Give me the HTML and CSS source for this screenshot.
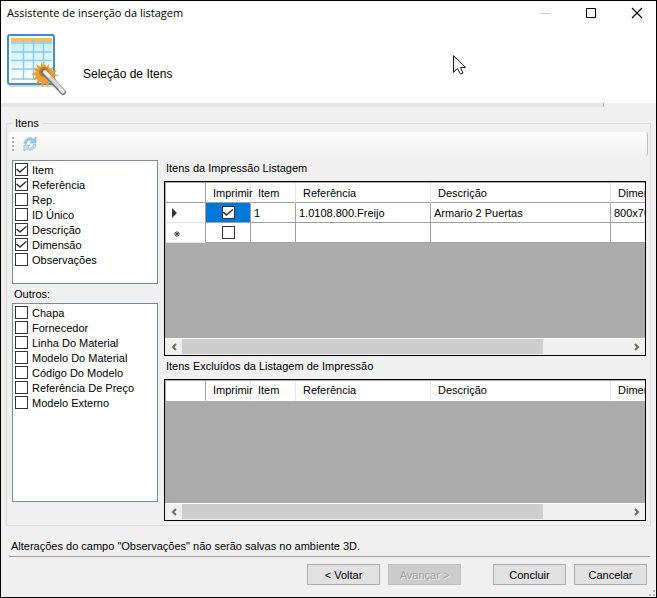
FILE: index.html
```html
<!DOCTYPE html>
<html lang="pt">
<head>
<meta charset="utf-8">
<title>Assistente de inserção da listagem</title>
<link rel="stylesheet" href="styles.css">
</head>
<body>
<div class="window">
  <header class="header">
    <div class="titlebar">
      <h1 class="title">Assistente de inserção da listagem</h1>
      <div class="controls">
        <button class="control" aria-label="Minimizar" disabled><svg width="12" height="12"><path d="M1 6.5h10" stroke="#ccc"/></svg></button>
        <button class="control" aria-label="Maximizar"><svg width="12" height="12"><path d="M1.5 1.5h9v9h-9z" stroke="#000" fill="none"/></svg></button>
        <button class="control" aria-label="Fechar"><svg width="12" height="12"><path d="M1 1l10 10M11 1L1 11" stroke="#000" stroke-width="1.2"/></svg></button>
      </div>
    </div>
    <div class="banner">
      <svg class="logo" width="62" height="64" viewBox="0 0 62 64">
        <defs>
          <linearGradient id="sheet" x2="0" y2="1"><stop offset="0" stop-color="#c4eff9"/><stop offset="1" stop-color="#fff"/></linearGradient>
          <linearGradient id="wand" x1="0" y1="1" x2="1" y2="0"><stop offset="0" stop-color="#555"/><stop offset=".5" stop-color="#ddd"/><stop offset="1" stop-color="#555"/></linearGradient>
        </defs>
        <path d="M2 52h46" stroke="#d5d5d5" stroke-width="2"/>
        <rect x="1" y="1" width="46" height="49" rx="2" fill="#fff" stroke="#3f8fc6" stroke-width="2"/>
        <rect x="4" y="8" width="41" height="39" fill="url(#sheet)"/>
        <path d="M4 4h41v4H4z" fill="#f5bd68"/>
        <path d="M4 9h41M4 18h41M4 26.500h41M4 35h41M4 45h41M16.500 5v41M26.500 5v41M36.500 5v41" stroke="#94c9e3" stroke-width="1.500"/>
        <path d="M38 29l1 4 3-3v5l4-2-1 4 5-1-3 4 5 1-5 2 3 4-5-1 1 5-4-3-1 5-3-4-3 4-1-5-5 2 2-5-5 1 3-4-5-2 5-2-3-4 5 1-2-5 5 3v-5l3 4z" fill="#ed9d35"/>
        <circle cx="37" cy="38" r="5" fill="#c87812"/>
        <path d="M37 38l19 20" stroke="#777" stroke-width="6" stroke-linecap="round"/>
        <path d="M38 38l18 19" stroke="url(#wand)" stroke-width="4" stroke-linecap="round"/>
        <path d="M38 38l4 4M53 55l3 3" stroke="#eee" stroke-width="3" stroke-linecap="round"/>
      </svg>
      <h2 class="step">Seleção de Itens</h2>
    </div>
    <svg class="cursor" width="14" height="22" viewBox="0 0 14 22"><path d="M1.500 1.500v17l4-4 3 5.500 2.500-1-2.500-5.500h5z" fill="#fff" stroke="#223" stroke-width="1"/></svg>
  </header>
  <div class="progress"></div>

  <main class="body">
    <fieldset class="group">
      <legend>Itens</legend>
      <div class="toolbar">
        <span class="grip"></span>
        <button class="refresh" aria-label="Atualizar">
          <svg width="16" height="16" viewBox="0 0 16 16"><path d="M2 7.500C3 2 8 .5 11.500 3L14 1v6H8l2-2C7.500 3 5 4.500 4.500 7.500z" fill="#8cc8ec" stroke="#9fb4c0" stroke-width=".7"/><path d="M14 8.500C13 14 8 15.500 4.500 13L2 15V9h6l-2 2c2.500 2 5 .5 5.500-2.500z" fill="#b9e0f6" stroke="#9fb4c0" stroke-width=".7"/></svg>
        </button>
      </div>
      <div class="panes">
        <div class="side">
          <ul class="checks checks-main">
            <li><label><input type="checkbox" checked>Item</label></li>
            <li><label><input type="checkbox" checked>Referência</label></li>
            <li><label><input type="checkbox">Rep.</label></li>
            <li><label><input type="checkbox">ID Único</label></li>
            <li><label><input type="checkbox" checked>Descrição</label></li>
            <li><label><input type="checkbox" checked>Dimensão</label></li>
            <li><label><input type="checkbox">Observações</label></li>
          </ul>
          <h3 class="side-title">Outros:</h3>
          <ul class="checks checks-other">
            <li><label><input type="checkbox">Chapa</label></li>
            <li><label><input type="checkbox">Fornecedor</label></li>
            <li><label><input type="checkbox">Linha Do Material</label></li>
            <li><label><input type="checkbox">Modelo Do Material</label></li>
            <li><label><input type="checkbox">Código Do Modelo</label></li>
            <li><label><input type="checkbox">Referência De Preço</label></li>
            <li><label><input type="checkbox">Modelo Externo</label></li>
          </ul>
        </div>
        <div class="grids">
          <h3 class="grid-title">Itens da Impressão Listagem</h3>
          <div class="grid grid-included">
            <div class="view">
              <table>
                <colgroup><col class="c-mark"><col class="c-small"><col class="c-small"><col class="c-ref"><col class="c-desc"><col class="c-dim"></colgroup>
                <thead><tr><th></th><th>Imprimir</th><th>Item</th><th>Referência</th><th>Descrição</th><th>Dimensão</th></tr></thead>
                <tbody>
                  <tr><td class="mark"><svg width="16" height="10"><path d="M6 0l5 5-5 5z" fill="#333"/></svg></td><td class="tick selected"><input type="checkbox" aria-label="Imprimir item 1" checked></td><td>1</td><td>1.0108.800.Freijo</td><td>Armario 2 Puertas</td><td>800x700x300</td></tr>
                  <tr><td class="mark"><svg width="16" height="10"><path d="M11 3v6M8 6h6M9 4l4 4M13 4L9 8" stroke="#444"/></svg></td><td class="tick"><input type="checkbox" aria-label="Imprimir novo item"></td><td></td><td></td><td></td><td></td></tr>
                </tbody>
              </table>
            </div>
            <div class="scroll">
              <button class="arrow" aria-label="Rolar para a esquerda"><svg width="6" height="8"><path d="M5 1L2 4l3 3" fill="none" stroke="#776560" stroke-width="2"/></svg></button>
              <div class="track"><div class="thumb"></div></div>
              <button class="arrow" aria-label="Rolar para a direita"><svg width="6" height="8"><path d="M1 1l3 3-3 3" fill="none" stroke="#776560" stroke-width="2"/></svg></button>
            </div>
          </div>
          <h3 class="grid-title grid-title-next">Itens Excluídos da Listagem de Impressão</h3>
          <div class="grid grid-excluded">
            <div class="view">
              <table class="empty">
                <colgroup><col class="c-mark"><col class="c-small"><col class="c-small"><col class="c-ref"><col class="c-desc"><col class="c-dim"></colgroup>
                <thead><tr><th></th><th>Imprimir</th><th>Item</th><th>Referência</th><th>Descrição</th><th>Dimensão</th></tr></thead>
              </table>
            </div>
            <div class="scroll">
              <button class="arrow" aria-label="Rolar para a esquerda"><svg width="6" height="8"><path d="M5 1L2 4l3 3" fill="none" stroke="#776560" stroke-width="2"/></svg></button>
              <div class="track"><div class="thumb"></div></div>
              <button class="arrow" aria-label="Rolar para a direita"><svg width="6" height="8"><path d="M1 1l3 3-3 3" fill="none" stroke="#776560" stroke-width="2"/></svg></button>
            </div>
          </div>
        </div>
      </div>
    </fieldset>
    <p class="note">Alterações do campo "Observações" não serão salvas no ambiente 3D.</p>
  </main>
  <footer class="footer">
    <button class="btn">&lt; Voltar</button>
    <button class="btn" disabled>Avançar &gt;</button>
    <button class="btn btn-finish">Concluir</button>
    <button class="btn">Cancelar</button>
  </footer>
  <svg class="resize" width="8" height="8"><path d="M5 1h2v2H5zM5 5h2v2H5zM1 5h2v2H1z" fill="#bbb"/></svg>
</div>
</body>
</html>
```
FILE: styles.css
```css
* { box-sizing: border-box; }

body {
  margin: 0;
  font: 11px/14px "Liberation Sans", Arial, sans-serif;
  color: #000;
}

h1, h2, h3, p, ul { margin: 0; padding: 0; font: inherit; }
button { font: inherit; color: inherit; border: 0; background: none; padding: 0; }
svg { display: block; }

.window {
  position: relative;
  display: flex;
  flex-direction: column;
  min-height: 100vh;
  border: 1px solid #000;
  border-bottom-width: 2px;
  background: #f0f0f0;
}

/* Title bar and banner */
.header { position: relative; background: #fff; height: 102px; }
.titlebar { display: flex; justify-content: space-between; height: 24px; padding-left: 6px; }
.title { font: 11px/24px "Open Sans", "Noto Sans", sans-serif; white-space: nowrap; }
.controls { display: flex; }
.control { width: 46px; display: grid; place-items: center; }
.controls .control:last-child { width: 42px; padding-left: 4px; }
.banner { display: flex; align-items: flex-start; gap: 14px; padding: 9px 5px 0 6px; }
.step { padding-top: 33px; font-size: 12px; }
.cursor { position: absolute; left: 451px; top: 53px; }

.progress { width: 603px; max-width: 92%; height: 4px; flex: none; background: #e5e5e5; border-right: 1px solid #b4b4b4; }

/* Group box */
.body { flex: 1; display: flex; flex-direction: column; padding: 9px 5px 0; }
.group {
  flex: 1;
  min-width: 0;
  margin: 0;
  padding: 2px 2px 4px;
  border: 1px solid #dcdcdc;
}
.group legend { margin-left: 3px; padding: 0 3px; }
.toolbar {
  display: flex;
  align-items: center;
  gap: 8px;
  height: 24px;
  padding-left: 3px;
  border-radius: 3px;
  border-right: 1px solid #bbb;
  background: linear-gradient(#fdfdfd, #f0f0f0);
}
.grip { width: 2px; height: 14px; background: repeating-linear-gradient(#b4b4b4 0 2px, transparent 2px 4px); }
.refresh { width: 16px; height: 16px; }
.panes { display: flex; gap: 6px; min-height: calc(100vh - 233px); padding: 4px 2px 0 3px; }

/* Check lists */
.side { flex: none; width: 146px; display: flex; flex-direction: column; padding-bottom: 19px; }
.checks { list-style: none; background: #fff; border: 1px solid #828790; padding: 1px 2px; }
.checks-main { height: 124px; }
.checks-other { flex: 1; }
.checks label { display: flex; align-items: center; gap: 4px; height: 15px; white-space: nowrap; }
.side-title { padding: 3px 2px 2px; }

input[type="checkbox"] {
  appearance: none;
  position: relative;
  flex: none;
  width: 13px;
  height: 13px;
  margin: 0;
  border: 1px solid #333;
  background: #fff;
}
input[type="checkbox"]:checked::after {
  content: "";
  position: absolute;
  inset: 1px 0;
  background: #333;
  clip-path: polygon(0 50%, 10% 40%, 36% 68%, 90% 10%, 100% 20%, 36% 88%);
}

/* Data grids */
.grids { flex: 1; min-width: 0; display: flex; flex-direction: column; padding-top: 1px; }
.grid-title { padding: 0 2px 6px; }
.grid-title-next { padding-top: 3px; }
.grid { display: flex; flex-direction: column; border: 1px solid #000; background: #ababab; }
.grid-included { flex: 175 1 0; }
.grid-excluded { flex: 142 1 0; }
.view { flex: 1; overflow: hidden; padding: 1px 0 0 1px; }
table { table-layout: fixed; width: 545px; border-spacing: 0; }
.c-mark { width: 40px; }
.c-small { width: 45px; }
.c-ref { width: 135px; }
.c-desc { width: 180px; }
.c-dim { width: 100px; }
th, td {
  height: 20px;
  padding: 0 0 0 3px;
  border-right: 1px solid #a0a0a0;
  border-bottom: 1px solid #a0a0a0;
  background: #fff;
  font-weight: normal;
  text-align: left;
  white-space: nowrap;
}
th { padding-left: 7px; border-right-color: #e5e5e5; }
th:first-child { border-right-color: #a0a0a0; }
.empty th { border-bottom-color: #fff; }
td.mark { padding: 0; border-bottom-color: #e5e5e5; }
td.tick { padding: 0; }
td.tick input { display: block; margin: 0 auto; }
td.selected { background: #0078d7; }

.scroll { display: flex; height: 17px; border-top: 1px solid #fff; background: #f0f0f0; }
.arrow { width: 17px; display: grid; place-items: center; }
.track { flex: 1; }
.thumb { width: 81%; height: 15px; background: #cdcdcd; }

/* Footer */
.note { padding: 13px 5px 3px; }
.footer {
  display: flex;
  gap: 8px;
  justify-content: flex-end;
  margin: 0 6px 0 8px;
  padding: 7px 3px 12px;
  border-top: 1px solid #a0a0a0;
}
.btn { width: 73px; height: 21px; border: 1px solid #adadad; background: #e1e1e1; }
.btn:disabled { background: #ccc; border-color: #bfbfbf; color: #a0a0a0; text-shadow: 1px 1px #eee; }
.btn-finish { margin-left: 24px; }
.resize { position: absolute; right: 0; bottom: 0; }
```
